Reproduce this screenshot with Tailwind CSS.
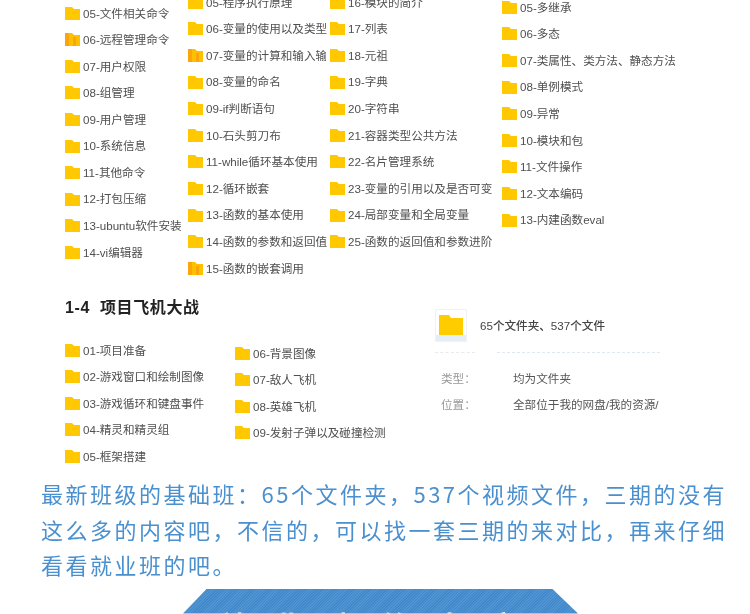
<!DOCTYPE html>
<html lang="zh-CN">
<head>
    <meta charset="UTF-8">
    <title>基础班目录</title>
    <script src="https://cdn.jsdelivr.net/npm/@tailwindcss/browser@4"></script>
</head>
<body class="bg-white font-['Liberation_Sans','Noto_Sans_CJK_SC',sans-serif]">
<svg class="hidden">
    <symbol id="folder" viewBox="0 0 15 13">
        <path d="M0 0h7l2 2h6v11H0z" fill="#ffc800"/>
    </symbol>
    <symbol id="folder-hl" viewBox="0 0 15 13">
        <path d="M0 0h7l2 2h6v11H0z" fill="#ffc000"/>
        <path d="M0 0h4v13H0zM8 4h3v9H8z" fill="#fba50c"/>
    </symbol>
</svg>

<div class="w-[750px] h-[614px] overflow-hidden flex flex-col blur-[0.3px]">
    <!-- 上半部分 -->
    <div class="h-[288px] shrink-0 overflow-hidden flex items-start text-[11.6px] text-[#4f4f4f]">
        <div class="ml-[65px] w-[123px] flex flex-col">
            <div class="h-[26.55px] shrink-0 flex items-center gap-[3px]"><svg class="w-[15px] h-[13px] shrink-0"><use href="#folder"/></svg>05-文件相关命令</div>
            <div class="h-[26.55px] shrink-0 flex items-center gap-[3px]"><svg class="w-[15px] h-[13px] shrink-0"><use href="#folder-hl"/></svg>06-远程管理命令</div>
            <div class="h-[26.55px] shrink-0 flex items-center gap-[3px]"><svg class="w-[15px] h-[13px] shrink-0"><use href="#folder"/></svg>07-用户权限</div>
            <div class="h-[26.55px] shrink-0 flex items-center gap-[3px]"><svg class="w-[15px] h-[13px] shrink-0"><use href="#folder"/></svg>08-组管理</div>
            <div class="h-[26.55px] shrink-0 flex items-center gap-[3px]"><svg class="w-[15px] h-[13px] shrink-0"><use href="#folder"/></svg>09-用户管理</div>
            <div class="h-[26.55px] shrink-0 flex items-center gap-[3px]"><svg class="w-[15px] h-[13px] shrink-0"><use href="#folder"/></svg>10-系统信息</div>
            <div class="h-[26.55px] shrink-0 flex items-center gap-[3px]"><svg class="w-[15px] h-[13px] shrink-0"><use href="#folder"/></svg>11-其他命令</div>
            <div class="h-[26.55px] shrink-0 flex items-center gap-[3px]"><svg class="w-[15px] h-[13px] shrink-0"><use href="#folder"/></svg>12-打包压缩</div>
            <div class="h-[26.55px] shrink-0 flex items-center gap-[3px]"><svg class="w-[15px] h-[13px] shrink-0"><use href="#folder"/></svg>13-ubuntu软件安装</div>
            <div class="h-[26.55px] shrink-0 flex items-center gap-[3px]"><svg class="w-[15px] h-[13px] shrink-0"><use href="#folder"/></svg>14-vi编辑器</div>
        </div>
        <div class="w-[142px] mt-[-11px] flex flex-col">
            <div class="h-[26.6px] shrink-0 flex items-center gap-[3px]"><svg class="w-[15px] h-[13px] shrink-0"><use href="#folder"/></svg>05-程序执行原理</div>
            <div class="h-[26.6px] shrink-0 flex items-center gap-[3px]"><svg class="w-[15px] h-[13px] shrink-0"><use href="#folder"/></svg>06-变量的使用以及类型</div>
            <div class="h-[26.6px] shrink-0 flex items-center gap-[3px]"><svg class="w-[15px] h-[13px] shrink-0"><use href="#folder-hl"/></svg><span class="w-[120px] overflow-hidden whitespace-nowrap">07-变量的计算和输入输出</span></div>
            <div class="h-[26.6px] shrink-0 flex items-center gap-[3px]"><svg class="w-[15px] h-[13px] shrink-0"><use href="#folder"/></svg>08-变量的命名</div>
            <div class="h-[26.6px] shrink-0 flex items-center gap-[3px]"><svg class="w-[15px] h-[13px] shrink-0"><use href="#folder"/></svg>09-if判断语句</div>
            <div class="h-[26.6px] shrink-0 flex items-center gap-[3px]"><svg class="w-[15px] h-[13px] shrink-0"><use href="#folder"/></svg>10-石头剪刀布</div>
            <div class="h-[26.6px] shrink-0 flex items-center gap-[3px]"><svg class="w-[15px] h-[13px] shrink-0"><use href="#folder"/></svg>11-while循环基本使用</div>
            <div class="h-[26.6px] shrink-0 flex items-center gap-[3px]"><svg class="w-[15px] h-[13px] shrink-0"><use href="#folder"/></svg>12-循环嵌套</div>
            <div class="h-[26.6px] shrink-0 flex items-center gap-[3px]"><svg class="w-[15px] h-[13px] shrink-0"><use href="#folder"/></svg>13-函数的基本使用</div>
            <div class="h-[26.6px] shrink-0 flex items-center gap-[3px]"><svg class="w-[15px] h-[13px] shrink-0"><use href="#folder"/></svg>14-函数的参数和返回值</div>
            <div class="h-[26.6px] shrink-0 flex items-center gap-[3px]"><svg class="w-[15px] h-[13px] shrink-0"><use href="#folder-hl"/></svg>15-函数的嵌套调用</div>
        </div>
        <div class="w-[172px] mt-[-11px] flex flex-col">
            <div class="h-[26.6px] shrink-0 flex items-center gap-[3px]"><svg class="w-[15px] h-[13px] shrink-0"><use href="#folder"/></svg>16-模块的简介</div>
            <div class="h-[26.6px] shrink-0 flex items-center gap-[3px]"><svg class="w-[15px] h-[13px] shrink-0"><use href="#folder"/></svg>17-列表</div>
            <div class="h-[26.6px] shrink-0 flex items-center gap-[3px]"><svg class="w-[15px] h-[13px] shrink-0"><use href="#folder"/></svg>18-元祖</div>
            <div class="h-[26.6px] shrink-0 flex items-center gap-[3px]"><svg class="w-[15px] h-[13px] shrink-0"><use href="#folder"/></svg>19-字典</div>
            <div class="h-[26.6px] shrink-0 flex items-center gap-[3px]"><svg class="w-[15px] h-[13px] shrink-0"><use href="#folder"/></svg>20-字符串</div>
            <div class="h-[26.6px] shrink-0 flex items-center gap-[3px]"><svg class="w-[15px] h-[13px] shrink-0"><use href="#folder"/></svg>21-容器类型公共方法</div>
            <div class="h-[26.6px] shrink-0 flex items-center gap-[3px]"><svg class="w-[15px] h-[13px] shrink-0"><use href="#folder"/></svg>22-名片管理系统</div>
            <div class="h-[26.6px] shrink-0 flex items-center gap-[3px]"><svg class="w-[15px] h-[13px] shrink-0"><use href="#folder"/></svg>23-变量的引用以及是否可变</div>
            <div class="h-[26.6px] shrink-0 flex items-center gap-[3px]"><svg class="w-[15px] h-[13px] shrink-0"><use href="#folder"/></svg>24-局部变量和全局变量</div>
            <div class="h-[26.6px] shrink-0 flex items-center gap-[3px]"><svg class="w-[15px] h-[13px] shrink-0"><use href="#folder"/></svg>25-函数的返回值和参数进阶</div>
        </div>
        <div class="mt-[-6px] flex flex-col">
            <div class="h-[26.6px] shrink-0 flex items-center gap-[3px]"><svg class="w-[15px] h-[13px] shrink-0"><use href="#folder"/></svg>05-多继承</div>
            <div class="h-[26.6px] shrink-0 flex items-center gap-[3px]"><svg class="w-[15px] h-[13px] shrink-0"><use href="#folder"/></svg>06-多态</div>
            <div class="h-[26.6px] shrink-0 flex items-center gap-[3px]"><svg class="w-[15px] h-[13px] shrink-0"><use href="#folder"/></svg>07-类属性、类方法、静态方法</div>
            <div class="h-[26.6px] shrink-0 flex items-center gap-[3px]"><svg class="w-[15px] h-[13px] shrink-0"><use href="#folder"/></svg>08-单例模式</div>
            <div class="h-[26.6px] shrink-0 flex items-center gap-[3px]"><svg class="w-[15px] h-[13px] shrink-0"><use href="#folder"/></svg>09-异常</div>
            <div class="h-[26.6px] shrink-0 flex items-center gap-[3px]"><svg class="w-[15px] h-[13px] shrink-0"><use href="#folder"/></svg>10-模块和包</div>
            <div class="h-[26.6px] shrink-0 flex items-center gap-[3px]"><svg class="w-[15px] h-[13px] shrink-0"><use href="#folder"/></svg>11-文件操作</div>
            <div class="h-[26.6px] shrink-0 flex items-center gap-[3px]"><svg class="w-[15px] h-[13px] shrink-0"><use href="#folder"/></svg>12-文本编码</div>
            <div class="h-[26.6px] shrink-0 flex items-center gap-[3px]"><svg class="w-[15px] h-[13px] shrink-0"><use href="#folder"/></svg>13-内建函数eval</div>
        </div>
    </div>

    <!-- 1-4 项目飞机大战 -->
    <div class="h-[188px] shrink-0 flex items-start">
        <div class="ml-[65px] w-[370px] flex flex-col text-[11.6px] text-[#4f4f4f]">
            <div class="h-[49px] shrink-0 pt-[8px] text-[16px] tracking-[0.6px] font-bold text-[#222] whitespace-pre">1-4  项目飞机大战</div>
            <div class="flex items-start">
                <div class="w-[170px] flex flex-col">
                    <div class="h-[26.5px] shrink-0 flex items-center gap-[3px]"><svg class="w-[15px] h-[13px] shrink-0"><use href="#folder"/></svg>01-项目准备</div>
                    <div class="h-[26.5px] shrink-0 flex items-center gap-[3px]"><svg class="w-[15px] h-[13px] shrink-0"><use href="#folder"/></svg>02-游戏窗口和绘制图像</div>
                    <div class="h-[26.5px] shrink-0 flex items-center gap-[3px]"><svg class="w-[15px] h-[13px] shrink-0"><use href="#folder"/></svg>03-游戏循环和键盘事件</div>
                    <div class="h-[26.5px] shrink-0 flex items-center gap-[3px]"><svg class="w-[15px] h-[13px] shrink-0"><use href="#folder"/></svg>04-精灵和精灵组</div>
                    <div class="h-[26.5px] shrink-0 flex items-center gap-[3px]"><svg class="w-[15px] h-[13px] shrink-0"><use href="#folder"/></svg>05-框架搭建</div>
                </div>
                <div class="mt-[3px] flex flex-col">
                    <div class="h-[26.5px] shrink-0 flex items-center gap-[3px]"><svg class="w-[15px] h-[13px] shrink-0"><use href="#folder"/></svg>06-背景图像</div>
                    <div class="h-[26.5px] shrink-0 flex items-center gap-[3px]"><svg class="w-[15px] h-[13px] shrink-0"><use href="#folder"/></svg>07-敌人飞机</div>
                    <div class="h-[26.5px] shrink-0 flex items-center gap-[3px]"><svg class="w-[15px] h-[13px] shrink-0"><use href="#folder"/></svg>08-英雄飞机</div>
                    <div class="h-[26.5px] shrink-0 flex items-center gap-[3px]"><svg class="w-[15px] h-[13px] shrink-0"><use href="#folder"/></svg>09-发射子弹以及碰撞检测</div>
                </div>
            </div>
        </div>
        <!-- 属性面板 -->
        <div class="w-[225px] pt-[21px] text-[11.6px] text-[#555]">
            <div class="flex items-center gap-[13px]">
                <div class="w-[32px] h-[33px] border border-[#f2f2f2] pt-[5px] pl-[3px] bg-[linear-gradient(#fff_80%,#e4eef4_80%)]">
                    <svg class="block w-[24px] h-[20px]" viewBox="0 0 24 20"><path d="M0 0h10l2 3h12v17H0z" fill="#ffcc00"/></svg>
                </div>
                <span class="font-medium text-[#444]">65个文件夹、537个文件</span>
            </div>
            <div class="mt-[10px] flex gap-[22px]">
                <div class="w-[40px] border-t border-dashed border-[#e6ebee]"></div>
                <div class="flex-1 border-t border-dashed border-[#dfe8ee]"></div>
            </div>
            <div class="mt-[17px] flex"><span class="w-[78px] text-[#999] pl-[6px]">类型：</span><span>均为文件夹</span></div>
            <div class="mt-[9px] flex"><span class="w-[78px] text-[#999] pl-[6px]">位置：</span><span>全部位于我的网盘/我的资源/</span></div>
        </div>
    </div>

    <!-- 说明文字 -->
    <p class="shrink-0 ml-[41px] w-[700px] text-[22px] leading-[35.5px] tracking-[2.5px] text-[#4a90cf] font-['Noto_Sans_CJK_SC',sans-serif]">最新班级的基础班：65个文件夹，537个视频文件，三期的没有这么多的内容吧，不信的，可以找一套三期的来对比，再来仔细看看就业班的吧。</p>

    <!-- 底部横幅 -->
    <div class="shrink-0 mt-[6px] ml-[183px] w-[395px] h-[25px] bg-[repeating-linear-gradient(135deg,#4289cb_0,#4289cb_1px,#5095d2_1px,#5095d2_2px)] [clip-path:polygon(24px_0,369px_0,395px_100%,0_100%)] flex justify-center pt-[24px] text-[30px] leading-none text-white font-bold tracking-[24px] whitespace-nowrap overflow-hidden">
        就业班的内容
    </div>
</div>
</body>
</html>
